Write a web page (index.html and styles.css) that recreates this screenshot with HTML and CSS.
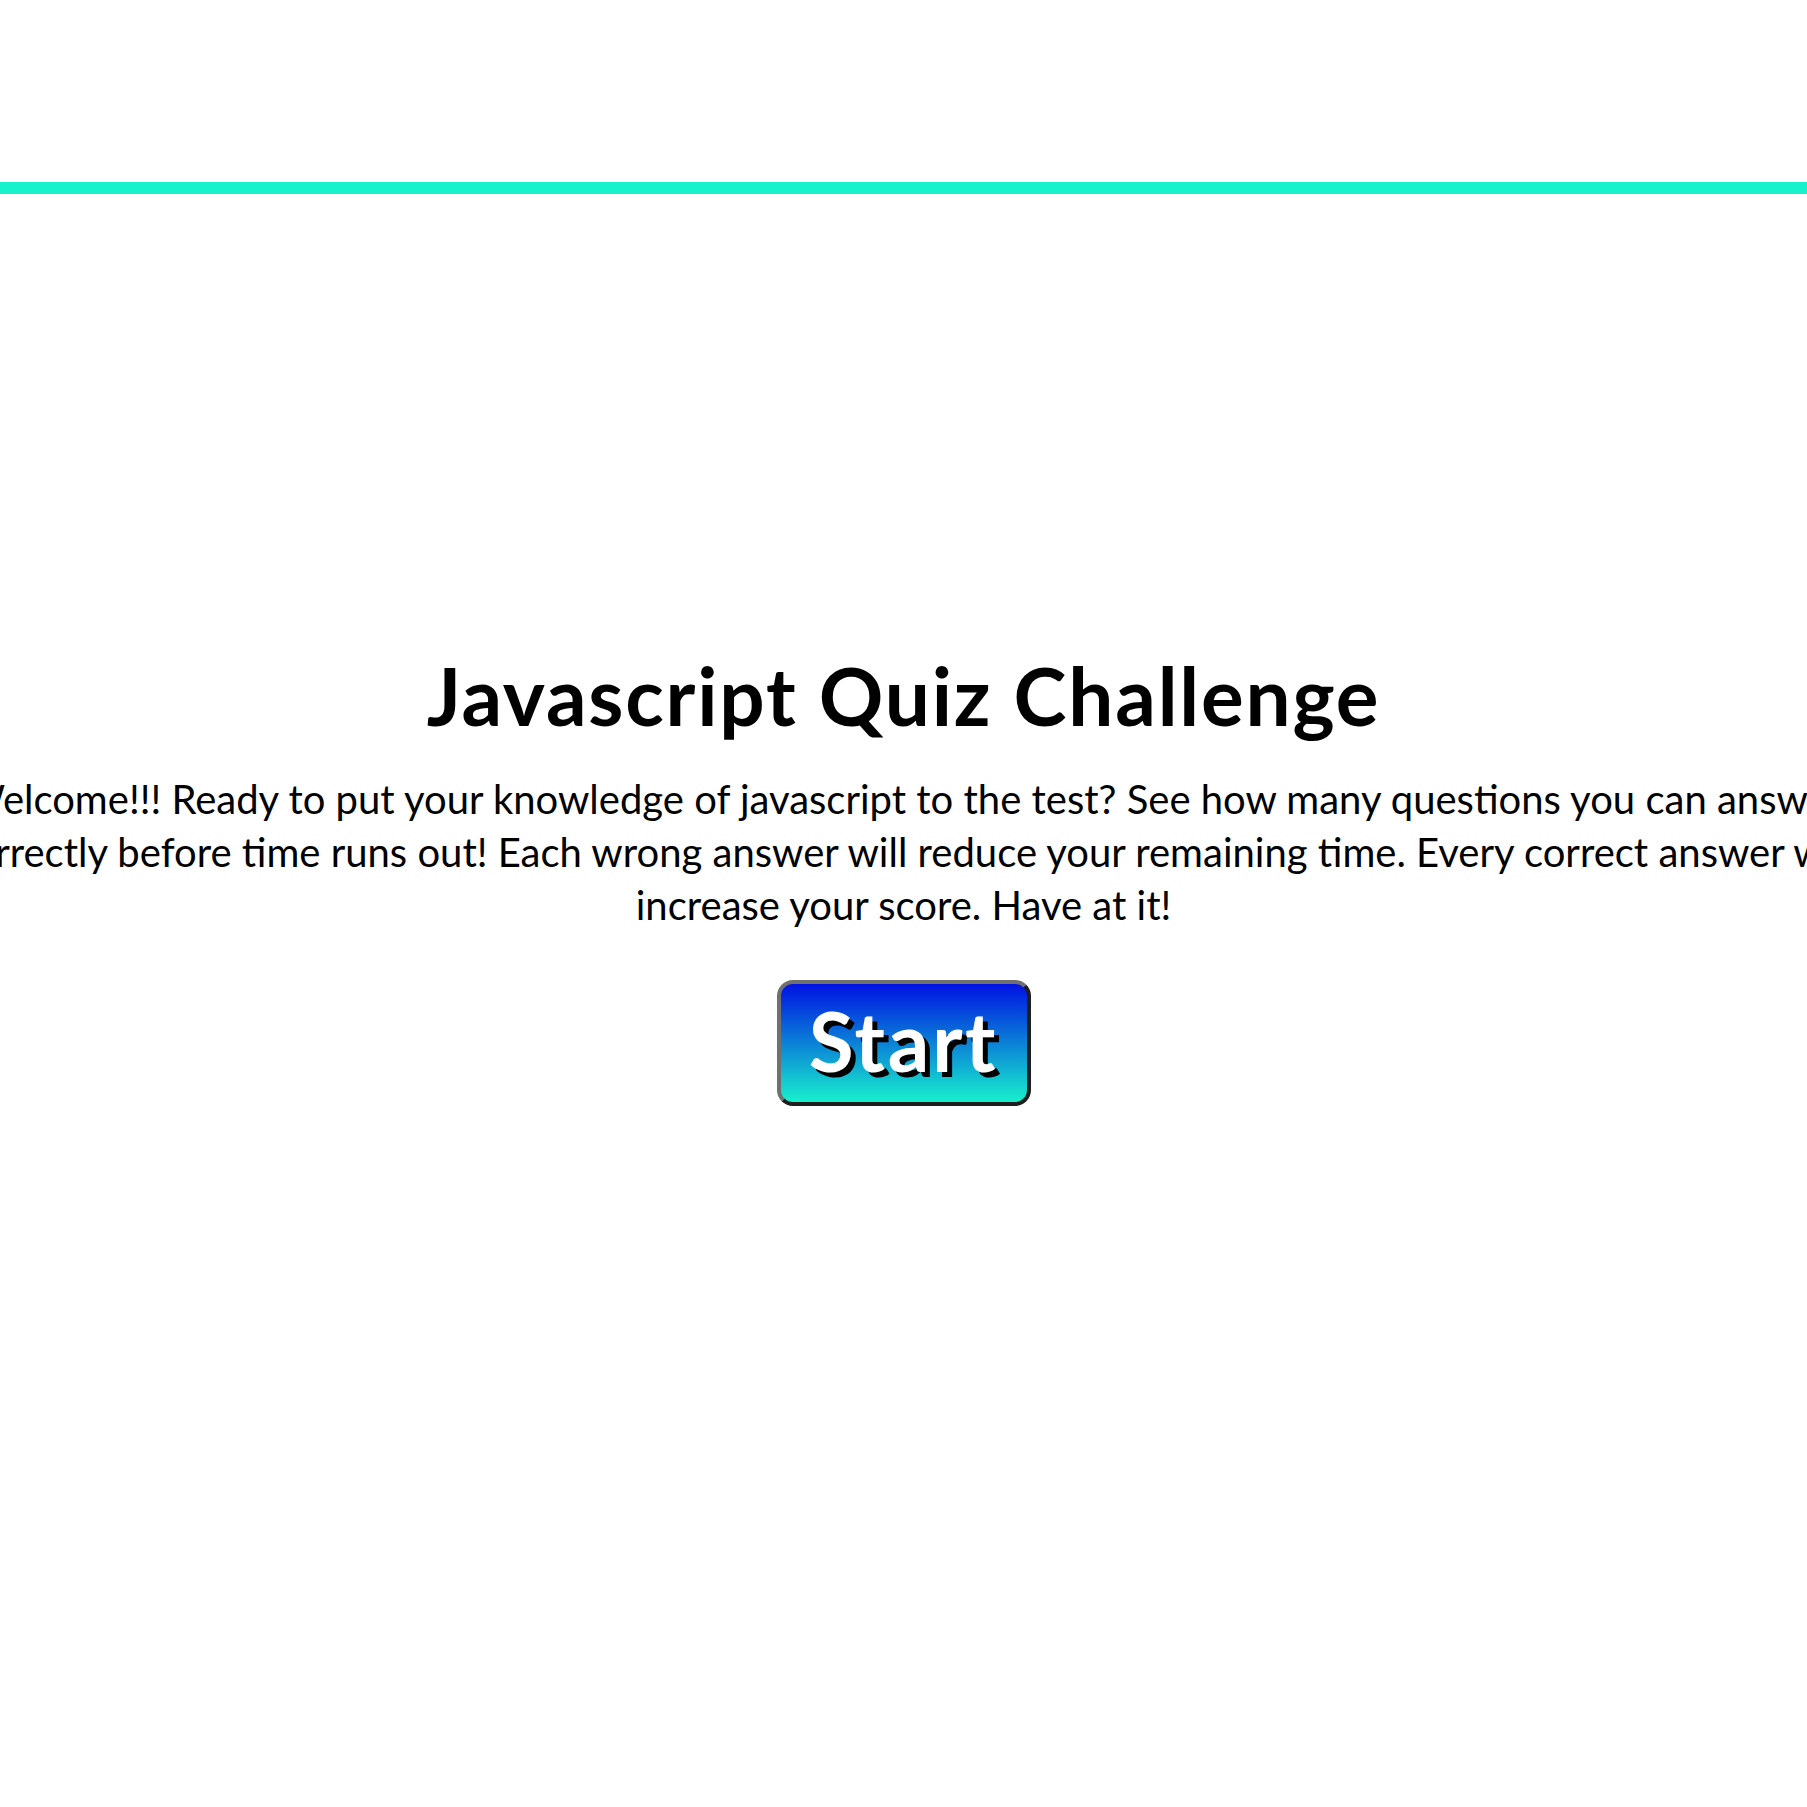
FILE: index.html
```html
<!DOCTYPE html>
<html lang="en">
<head>
<meta charset="utf-8">
<title>Javascript Quiz Challenge</title>
<link rel="stylesheet" href="styles.css">
</head>
<body>
<header class="top-bar"></header>
<main class="intro">
  <h1 class="intro-title">Javascript Quiz Challenge</h1>
  <p class="intro-text">Welcome!!! Ready to put your knowledge of javascript to the test? See how many questions you can answer correctly before time runs out! Each wrong answer will reduce your remaining time. Every correct answer will increase your score. Have at it!</p>
  <button class="start-btn" type="button">Start</button>
</main>
</body>
</html>
```
FILE: styles.css
```css
html {
  overflow-x: hidden;
}

body {
  margin: 0;
  background: #ffffff;
  color: #000000;
  font-family: "Lato", "Open Sans", sans-serif;
  overflow-x: hidden;
}

.top-bar {
  height: 182px;
  border-bottom: 12px solid #17f2cc;
}

.intro {
  display: flex;
  flex-direction: column;
  align-items: center;
  padding-top: 453px;
}

.intro-title {
  margin: 0;
  font-size: 80px;
  font-weight: 700;
  line-height: 96px;
  letter-spacing: 1.8px;
  white-space: nowrap;
}

.intro-text {
  margin: 30px 0 0;
  width: 1950px;
  flex-shrink: 0;
  font-size: 40px;
  font-weight: 400;
  line-height: 53px;
  text-align: center;
}

.start-btn {
  margin-top: 48px;
  box-sizing: border-box;
  width: 254px;
  height: 126px;
  padding: 0 0 6px;
  border: 4px solid;
  border-color: #707070 #1e1e1e #1e1e1e #707070;
  border-radius: 16px;
  background: linear-gradient(to bottom, #0012e2 0%, #17f0cc 100%);
  color: #ffffff;
  font-family: "Lato", "Open Sans", sans-serif;
  font-size: 82px;
  font-weight: 700;
  line-height: 110px;
  letter-spacing: 2.6px;
  text-shadow: 5px 5px 0 #000000;
  cursor: pointer;
}
```
